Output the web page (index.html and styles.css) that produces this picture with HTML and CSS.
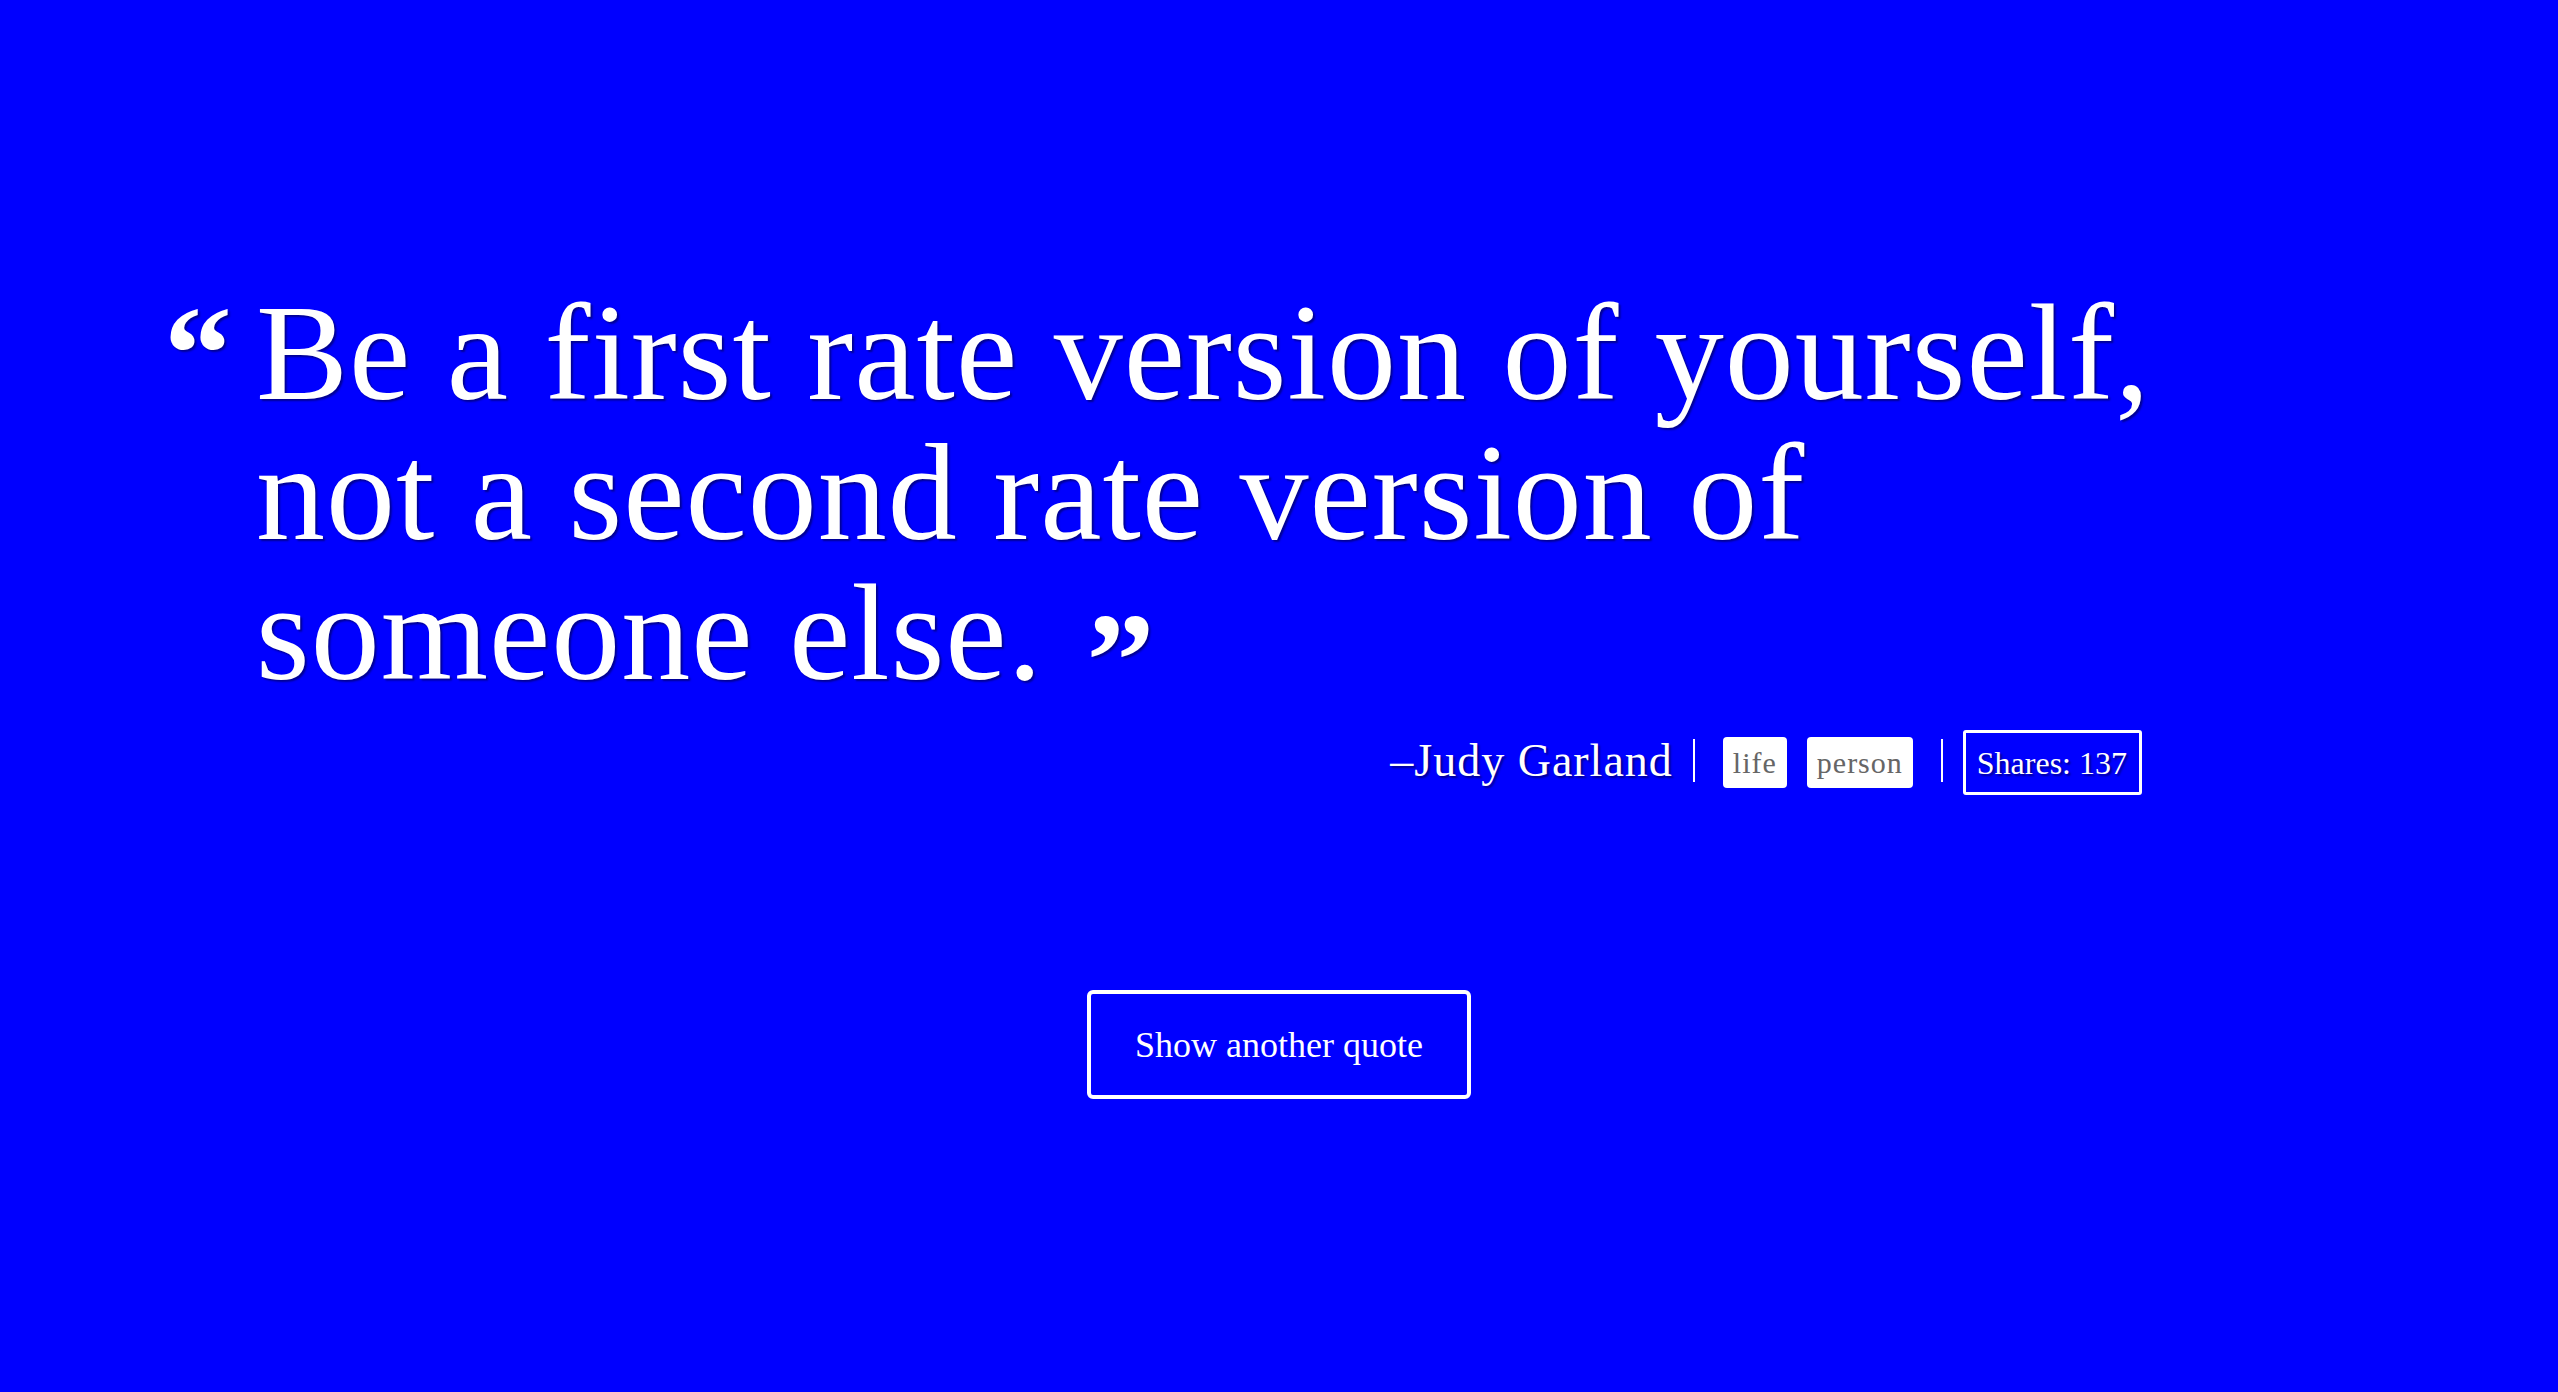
FILE: index.html
```html
<!DOCTYPE html>
<html lang="en">
<head>
<meta charset="utf-8">
<title>Random Quote</title>
<link rel="stylesheet" href="styles.css">
</head>
<body>
<main class="page">
  <section class="quote-card">
    <div class="quote-row">
      <span class="open-mark">“</span>
      <div class="quote-body">
        <blockquote class="quote-text">Be a first rate version of yourself, not a second rate version of someone else. <span class="close-mark">”</span></blockquote>
        <div class="meta">
          <span class="author">–Judy Garland</span>
          <span class="sep"></span>
          <ul class="tags">
            <li class="tag">life</li>
            <li class="tag">person</li>
          </ul>
          <span class="sep"></span>
          <span class="shares">Shares: 137</span>
        </div>
      </div>
    </div>
    <button class="next-btn" type="button">Show another quote</button>
  </section>
</main>
</body>
</html>
```
FILE: styles.css
```css
html, body {
  margin: 0;
  padding: 0;
}
body {
  background: #0000ff;
  color: #ffffff;
  font-family: "Liberation Serif", "Times New Roman", serif;
  min-height: 100vh;
}
.page {
  padding-top: 283px;
}
.quote-row {
  display: flex;
  align-items: flex-start;
  gap: 24px;
  padding-left: 164px;
}
.open-mark,
.close-mark {
  font-weight: 700;
  font-size: 136px;
  text-shadow: 2px 2px 2px rgba(0, 0, 40, 0.5);
}
.open-mark {
  line-height: 140px;
}
.close-mark {
  line-height: 0;
  vertical-align: -0.2em;
  margin-left: 8px;
}
.quote-body {
  width: 1902px;
}
.quote-text {
  margin: 0;
  font-size: 138px;
  line-height: 140px;
  letter-spacing: 1px;
  text-shadow: 2px 2px 2px rgba(0, 0, 40, 0.5);
}
.meta {
  display: flex;
  justify-content: flex-end;
  align-items: center;
  gap: 20px;
  margin-top: 27px;
  padding-right: 16px;
  height: 65px;
}
.author {
  font-size: 46px;
  line-height: 46px;
  letter-spacing: 1px;
  text-shadow: 2px 2px 2px rgba(0, 0, 40, 0.5);
  position: relative;
  top: -2px;
}
.sep {
  width: 2px;
  height: 43px;
  background: #ffffff;
  margin-top: -4px;
}
.tags {
  display: flex;
  gap: 20px;
  margin: 0 8px;
  padding: 0;
  list-style: none;
}
.tag {
  background: #ffffff;
  color: #666666;
  font-size: 30px;
  letter-spacing: 1px;
  line-height: 51px;
  height: 51px;
  padding: 0 10px;
  border-radius: 4px;
}
.shares {
  box-sizing: border-box;
  height: 65px;
  display: flex;
  align-items: center;
  padding: 0 12px 0 11px;
  border: 3px solid #ffffff;
  border-radius: 3px;
  font-size: 32px;
  line-height: 32px;
  text-shadow: 2px 2px 2px rgba(0, 0, 40, 0.5);
}
.next-btn {
  display: flex;
  align-items: center;
  justify-content: center;
  box-sizing: border-box;
  width: 384px;
  height: 109px;
  margin: 195px auto 0;
  background: transparent;
  color: #ffffff;
  border: 4px solid #ffffff;
  border-radius: 6px;
  font-family: "Liberation Serif", "Times New Roman", serif;
  font-size: 36px;
  cursor: pointer;
}
```
